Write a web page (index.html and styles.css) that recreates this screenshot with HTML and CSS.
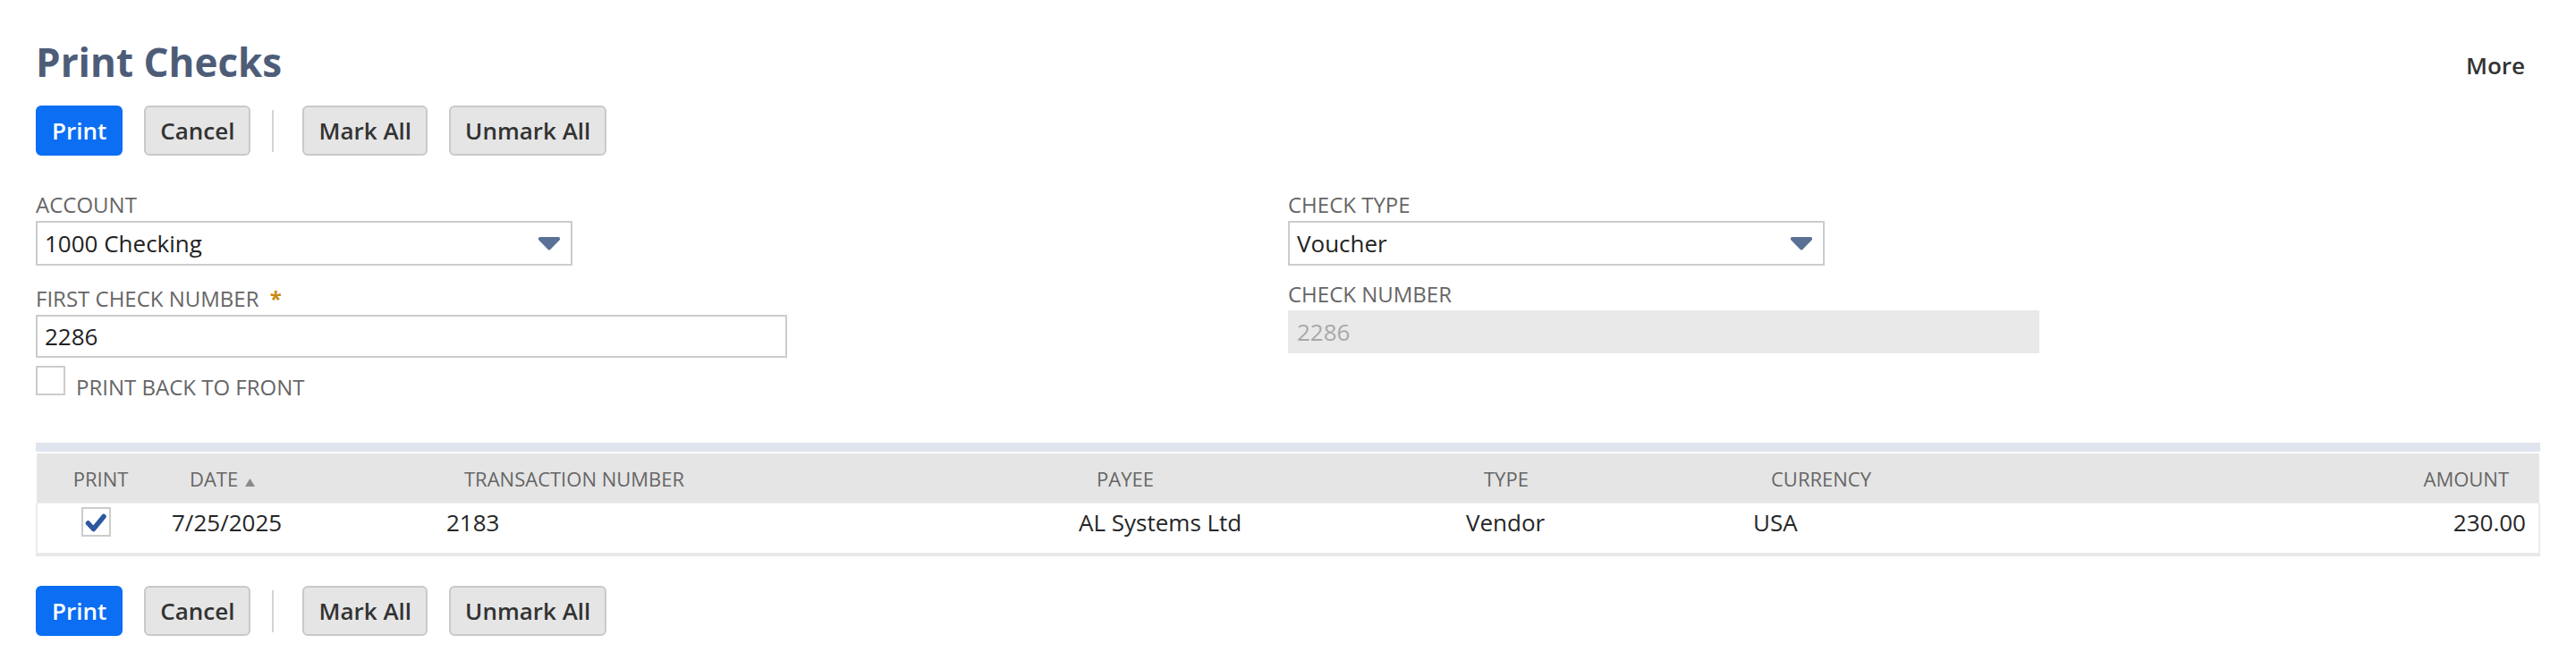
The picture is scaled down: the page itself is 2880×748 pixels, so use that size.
FILE: index.html
```html
<!DOCTYPE html>
<html lang="en">

<head>
    <meta charset="UTF-8">
    <meta name="viewport" content="width=device-width, initial-scale=1.0">
    <title>Print Checks</title>
    <link rel="stylesheet" href="styles.css">
</head>

<body>

    <div class="page">
        <div class="page-head">
            <h1 class="page-title">Print Checks</h1>
            <a class="more" href="#">More</a>
        </div>

        <div class="btn-bar">
            <button class="btn btn-primary" type="button">Print</button>
            <button class="btn" type="button">Cancel</button>
            <span class="btn-sep"></span>
            <button class="btn" type="button">Mark All</button>
            <button class="btn" type="button">Unmark All</button>
        </div>

        <div class="form-grid">
            <div class="form-col">
                <div class="field">
                    <label class="field-label">Account</label>
                    <div class="select">
                        <span>1000 Checking</span>
                        <svg class="select-arrow" width="24" height="15" viewBox="0 0 24 15">
                            <path d="M1.5 0H22.5Q24 0 24 1.5V3L13 14.2Q12 15 11 14.2L0 3V1.5Q0 0 1.5 0Z" />
                        </svg>
                    </div>
                </div>
                <div class="field field-req">
                    <label class="field-label">First Check Number <span class="req">*</span></label>
                    <div class="text-input">2286</div>
                </div>
                <label class="check-field">
                    <span class="checkbox"></span>
                    <span class="field-label">Print Back to Front</span>
                </label>
            </div>

            <div class="form-col">
                <div class="field">
                    <label class="field-label">Check Type</label>
                    <div class="select">
                        <span>Voucher</span>
                        <svg class="select-arrow" width="24" height="15" viewBox="0 0 24 15">
                            <path d="M1.5 0H22.5Q24 0 24 1.5V3L13 14.2Q12 15 11 14.2L0 3V1.5Q0 0 1.5 0Z" />
                        </svg>
                    </div>
                </div>
                <div class="field field-alt">
                    <label class="field-label">Check Number</label>
                    <div class="text-input disabled">2286</div>
                </div>
            </div>
        </div>

        <div class="sublist">
            <div class="sublist-strip"></div>
            <table class="sublist-table">
                <colgroup>
                    <col style="width: 131px">
                    <col style="width: 307px">
                    <col style="width: 707px">
                    <col style="width: 433px">
                    <col style="width: 321px">
                    <col style="width: 461px">
                    <col>
                </colgroup>
                <thead>
                    <tr>
                        <th class="col-print">Print</th>
                        <th>Date <svg class="sort-arrow" width="11" height="9" viewBox="0 0 11 9"><path d="M5.5 0L11 9H0Z" /></svg></th>
                        <th>Transaction Number</th>
                        <th>Payee</th>
                        <th>Type</th>
                        <th>Currency</th>
                        <th class="col-amount">Amount</th>
                    </tr>
                </thead>
                <tbody>
                    <tr>
                        <td class="col-print">
                            <span class="checkbox checked">
                                <svg width="28" height="28" viewBox="0 0 28 28">
                                    <path d="M5.5 15L11.5 21.5L23 7.5" />
                                </svg>
                            </span>
                        </td>
                        <td>7/25/2025</td>
                        <td>2183</td>
                        <td>AL Systems Ltd</td>
                        <td>Vendor</td>
                        <td>USA</td>
                        <td class="col-amount">230.00</td>
                    </tr>
                </tbody>
            </table>
        </div>

        <div class="btn-bar btn-bar-bottom">
            <button class="btn btn-primary" type="button">Print</button>
            <button class="btn" type="button">Cancel</button>
            <span class="btn-sep"></span>
            <button class="btn" type="button">Mark All</button>
            <button class="btn" type="button">Unmark All</button>
        </div>
    </div>

</body>

</html>
```

FILE: styles.css
```css
body {
    font-family: "Open Sans", Arial, sans-serif;
    background-color: #ffffff;
    color: #222222;
    margin: 0;
}

.page {
    padding: 39px 40px 0 40px;
}

/* title row */

.page-head {
    display: flex;
    justify-content: space-between;
    align-items: flex-start;
}

.page-title {
    margin: 0;
    font-size: 44px;
    line-height: 60px;
    font-weight: 700;
    color: #4d5d78;
}

.more {
    margin-top: 16px;
    padding: 0 17px;
    font-size: 26px;
    line-height: 36px;
    font-weight: 600;
    color: #333333;
    text-decoration: none;
}

/* buttons */

.btn-bar {
    display: flex;
    align-items: center;
    margin-top: 19px;
}

.btn-bar-bottom {
    margin-top: 33px;
}

.btn {
    height: 56px;
    padding: 0 16px;
    font-family: "Open Sans", Arial, sans-serif;
    font-size: 26px;
    font-weight: 600;
    color: #333333;
    background-color: #e5e5e5;
    border: 2px solid #c9c9c9;
    border-radius: 6px;
}

.btn + .btn {
    margin-left: 24px;
}

.btn-primary {
    color: #ffffff;
    background-color: #0b6ef3;
    border-color: #0b6ef3;
}

.btn-sep {
    width: 2px;
    height: 47px;
    margin: 0 32px 0 24px;
    background-color: #d4d4d4;
}

/* main fields */

.form-grid {
    display: grid;
    grid-template-columns: 1fr 1fr;
    margin-top: 39px;
}

.field-label {
    display: block;
    margin-bottom: 2px;
    font-size: 24px;
    line-height: 32px;
    color: #666666;
    text-transform: uppercase;
}

.req {
    margin-left: 6px;
    font-weight: 700;
    color: #c98a12;
}

.field-req {
    margin-top: 21px;
}

.field-alt {
    margin-top: 16px;
}

.select {
    display: flex;
    align-items: center;
    justify-content: space-between;
    width: 600px;
    height: 50px;
    padding: 0 12px 0 8px;
    box-sizing: border-box;
    border: 2px solid #cccccc;
    font-size: 26px;
    color: #222222;
}

.select-arrow {
    fill: #5a7196;
}

.text-input {
    width: 840px;
    height: 48px;
    padding: 0 8px;
    box-sizing: border-box;
    border: 2px solid #cccccc;
    font-size: 26px;
    line-height: 44px;
    color: #222222;
}

.text-input.disabled {
    background-color: #e9e9e9;
    border-color: #e9e9e9;
    color: #a8a8a8;
}

.check-field {
    display: flex;
    align-items: baseline;
    margin-top: 9px;
}

.check-field .field-label {
    margin: 0 0 0 12px;
}

.checkbox {
    display: inline-flex;
    align-items: center;
    justify-content: center;
    width: 33px;
    height: 33px;
    box-sizing: border-box;
    border: 2px solid #cccccc;
    background-color: #ffffff;
}

.checkbox.checked path {
    fill: none;
    stroke: #2a57a0;
    stroke-width: 5.5;
    stroke-linecap: round;
    stroke-linejoin: round;
}

/* transaction list */

.sublist {
    margin-top: 46px;
}

.sublist-strip {
    height: 10px;
    margin-bottom: 2px;
    background-color: #e0e4ee;
}

.sublist-table {
    width: 100%;
    border-collapse: collapse;
    table-layout: fixed;
}

.sublist-table th {
    height: 55px;
    padding: 0 0 0 40px;
    background-color: #e5e5e5;
    border-bottom: 1px solid #eeeeee;
    font-size: 22px;
    line-height: 30px;
    font-weight: 400;
    color: #666666;
    text-align: left;
    text-transform: uppercase;
    white-space: nowrap;
}

.sublist-table th.col-print {
    padding: 0 0 0 12px;
    text-align: center;
}

.sublist-table th.col-amount {
    padding: 0 34px 0 0;
    text-align: right;
}

.sort-arrow {
    margin-left: 2px;
    fill: #8a8a8a;
}

.sublist-table td {
    height: 55px;
    padding: 3px 0 16px 20px;
    box-sizing: border-box;
    vertical-align: top;
    font-size: 26px;
    line-height: 36px;
    color: #262626;
    border-bottom: 4px solid #e8e8e8;
}

.sublist-table td:first-child {
    border-left: 2px solid #ebebeb;
}

.sublist-table td:last-child {
    border-right: 2px solid #ebebeb;
}

.sublist-table td.col-print {
    padding: 4px 0 0 0;
    text-align: center;
}

.sublist-table td.col-amount {
    padding-right: 14px;
    text-align: right;
}
```
